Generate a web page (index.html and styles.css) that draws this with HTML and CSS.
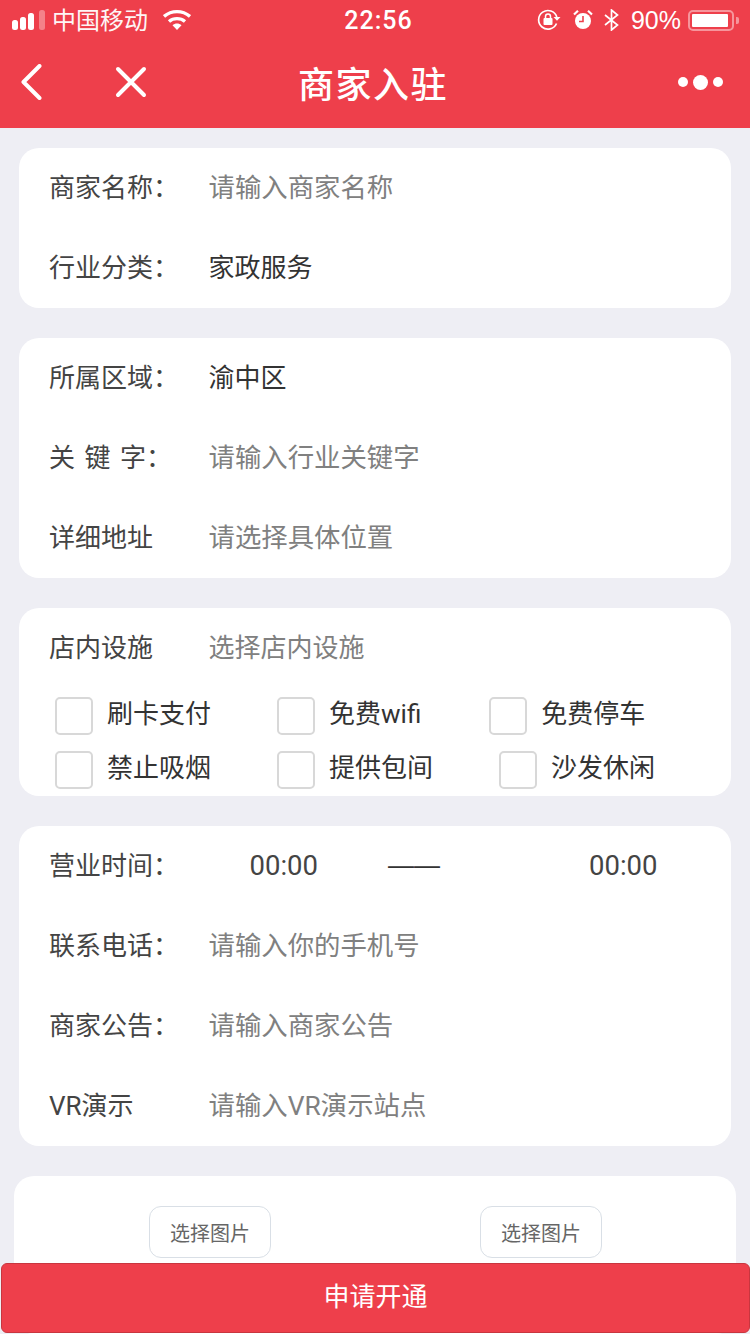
FILE: index.html
```html
<!DOCTYPE html>
<html lang="zh-CN">
<head>
    <meta name="viewport" content="width=device-width, initial-scale=1.0">
    <title>商家入驻</title>
    <link rel="stylesheet" href="styles.css">
</head>
<body>
    <div class="header">
        <div class="status-bar">
            <div class="status-left">
                <svg class="signal" width="34" height="22" viewBox="0 0 34 22">
                    <rect x="0" y="11" width="6" height="10" rx="2.5" fill="#fff"/>
                    <rect x="8" y="8" width="6" height="13" rx="2.5" fill="#fff"/>
                    <rect x="16" y="4" width="6" height="17" rx="2.5" fill="#fff"/>
                    <rect x="27" y="1" width="6" height="20" rx="2.5" fill="#fff" opacity="0.35"/>
                </svg>
                <span class="carrier">中国移动</span>
                <svg class="wifi" width="28" height="22" viewBox="0 0 28 22">
                    <path d="M1 7.5C8.500 1 19.500 1 27 7.500" fill="none" stroke="#fff" stroke-width="3.400"/>
                    <path d="M6 12.500C10.500 8.700 17.500 8.700 22 12.500" fill="none" stroke="#fff" stroke-width="3.400"/>
                    <path d="M9.500 16.300C12 14 16 14 18.500 16.300L14 21Z" fill="#fff"/>
                </svg>
            </div>
            <span class="clock">22:56</span>
            <div class="status-right">
                <svg width="24" height="22" viewBox="0 0 24 22">
                    <path d="M19.500 14.500A9.300 9.300 0 1 1 19.800 8" fill="none" stroke="#fff" stroke-width="1.700"/>
                    <path d="M16.500 8H23.500L20 11.800Z" fill="#fff"/>
                    <rect x="6.500" y="9" width="9" height="7" rx="1" fill="#fff"/>
                    <path d="M8.500 9.500V7.500A2.500 2.500 0 0 1 13.500 7.500V9.500" fill="none" stroke="#fff" stroke-width="1.500"/>
                </svg>
                <svg class="alarm" width="20" height="22" viewBox="0 0 20 22">
                    <circle cx="10" cy="12" r="8" fill="#fff"/>
                    <path d="M10 7V12.500H6" fill="none" stroke="#ee3f4b" stroke-width="1.600"/>
                    <path d="M1 5.500L5 1.800M19 5.500L15 1.800" stroke="#fff" stroke-width="2.200"/>
                </svg>
                <svg class="bluetooth" width="15" height="22" viewBox="0 0 15 22">
                    <path d="M1 6L13.500 16L7.500 21V1L13.500 6L1 16" fill="none" stroke="#fff" stroke-width="1.700"/>
                </svg>
                <span class="battery-text">90%</span>
                <div class="battery">
                    <div class="battery-body"><div class="battery-level"></div></div>
                    <div class="battery-nub"></div>
                </div>
            </div>
        </div>
        <div class="nav-bar">
            <div class="nav-left">
                <svg width="22" height="36" viewBox="0 0 22 36">
                    <path d="M19.500 2L3.500 18L19.500 34" fill="none" stroke="#fff" stroke-width="4" stroke-linecap="round" stroke-linejoin="round"/>
                </svg>
                <svg class="close" width="32" height="32" viewBox="0 0 32 32">
                    <path d="M3 3L29 29M29 3L3 29" fill="none" stroke="#fff" stroke-width="4" stroke-linecap="round"/>
                </svg>
            </div>
            <div class="nav-title">商家入驻</div>
            <div class="nav-right">
                <span class="dot"></span>
                <span class="dot dot-big"></span>
                <span class="dot"></span>
            </div>
        </div>
    </div>

    <div class="content">
        <div class="card">
            <div class="row"><span class="label">商家名称：</span><span class="hint">请输入商家名称</span></div>
            <div class="row"><span class="label">行业分类：</span><span class="value">家政服务</span></div>
        </div>

        <div class="card">
            <div class="row"><span class="label">所属区域：</span><span class="value">渝中区</span></div>
            <div class="row"><span class="label label-spaced">关 键 字：</span><span class="hint">请输入行业关键字</span></div>
            <div class="row"><span class="label">详细地址</span><span class="hint">请选择具体位置</span></div>
        </div>

        <div class="card card-facilities">
            <div class="row"><span class="label">店内设施</span><span class="hint hint-plain">选择店内设施</span></div>
            <div class="check-list">
                <div class="check-row">
                    <div class="check-item"><span class="check-box"></span>刷卡支付</div>
                    <div class="check-item check-item-wifi"><span class="check-box"></span>免费wifi</div>
                    <div class="check-item"><span class="check-box"></span>免费停车</div>
                </div>
                <div class="check-row">
                    <div class="check-item"><span class="check-box"></span>禁止吸烟</div>
                    <div class="check-item"><span class="check-box"></span>提供包间</div>
                    <div class="check-item"><span class="check-box"></span>沙发休闲</div>
                </div>
            </div>
        </div>

        <div class="card">
            <div class="row">
                <span class="label">营业时间：</span>
                <div class="time-range">
                    <span class="time">00:00</span>
                    <span class="time-dash">——</span>
                    <span class="time">00:00</span>
                </div>
            </div>
            <div class="row"><span class="label">联系电话：</span><span class="hint">请输入你的手机号</span></div>
            <div class="row"><span class="label">商家公告：</span><span class="hint">请输入商家公告</span></div>
            <div class="row"><span class="label">VR演示</span><span class="hint">请输入VR演示站点</span></div>
        </div>

        <div class="card card-images">
            <div class="pick-button">选择图片</div>
            <div class="pick-button">选择图片</div>
        </div>
    </div>

    <div class="submit-button"><span>申请开通</span></div>
</body>
</html>
```

FILE: styles.css
```css
body, html {
    overflow: hidden;
}

body {
    margin: 0;
    height: 1334px;
    background-color: #eeeef4;
    font-family: Roboto, "Noto Sans CJK SC", sans-serif;
    color: #333;
}

.header {
    background-color: #ee3f4b;
    color: #fff;
    height: 128px;
}

.status-bar {
    height: 40px;
    padding: 0 11px 0 12px;
    display: grid;
    grid-template-columns: 1fr auto 1fr;
    align-items: center;
    font-size: 24px;
}

.status-left {
    display: flex;
    align-items: center;
}

.carrier {
    margin-left: 6px;
    padding-bottom: 3px;
    opacity: 0.95;
}

.wifi {
    margin-left: 15px;
}

.clock {
    font-weight: 500;
    font-size: 25px;
    letter-spacing: 1px;
    margin-left: 6px;
}

.status-right {
    display: flex;
    align-items: center;
    justify-content: flex-end;
}

.alarm {
    margin-left: 12px;
}

.bluetooth {
    margin-left: 11px;
}

.battery-text {
    font-family: "Liberation Sans", sans-serif;
    margin-left: 12px;
    font-size: 25px;
}

.battery {
    display: flex;
    align-items: center;
    margin-left: 7px;
}

.battery-body {
    width: 46px;
    height: 21px;
    box-sizing: border-box;
    border: 2px solid rgba(255, 255, 255, 0.45);
    border-radius: 5px;
    padding: 2px;
}

.battery-level {
    width: 36px;
    height: 100%;
    background-color: #fff;
    border-radius: 1px;
}

.battery-nub {
    width: 3px;
    height: 7px;
    margin-left: 2px;
    background-color: rgba(255, 255, 255, 0.45);
    border-radius: 0 2px 2px 0;
}

.nav-bar {
    height: 88px;
    box-sizing: border-box;
    padding: 0 27px 4px 20px;
    display: grid;
    grid-template-columns: 1fr auto 1fr;
    align-items: center;
}

.nav-left {
    display: flex;
    align-items: center;
}

.close {
    margin-left: 73px;
}

.nav-title {
    font-size: 36px;
    font-weight: 500;
    letter-spacing: 1.5px;
    margin-left: 3px;
}

.nav-right {
    display: flex;
    align-items: center;
    justify-content: flex-end;
    gap: 5px;
}

.dot {
    width: 10px;
    height: 10px;
    background-color: #fff;
    border-radius: 50%;
}

.dot-big {
    width: 15px;
    height: 15px;
}

.content {
    padding: 20px 19px 0;
    display: flex;
    flex-direction: column;
    gap: 30px;
}

.card {
    background-color: #fff;
    border-radius: 20px;
    padding: 0 30px;
}

.row {
    height: 80px;
    box-sizing: border-box;
    padding-bottom: 6px;
    display: flex;
    align-items: center;
    font-size: 26px;
}

.label {
    width: 159.5px;
    flex-shrink: 0;
    white-space: pre;
    color: #444;
}

.label-spaced {
    word-spacing: 3px;
}

.hint {
    color: #808080;
    font-size: 26.4px;
}

.hint-plain {
    font-size: 26px;
}

.value {
    color: #333;
}

.card-facilities {
    height: 188px;
    overflow: hidden;
}

.check-list {
    margin-top: 9px;
    margin-left: 6px;
    display: flex;
    flex-direction: column;
    gap: 16px;
}

.check-row {
    display: flex;
    gap: 66px;
    height: 38px;
}

.check-item {
    display: flex;
    align-items: flex-start;
    font-size: 26px;
    color: #333;
    line-height: 34px;
}

.check-item-wifi {
    margin-right: 2px;
}

.check-box {
    width: 38px;
    height: 38px;
    box-sizing: border-box;
    border: 2px solid #d8d8d8;
    border-radius: 5px;
    margin-right: 14px;
}

.time-range {
    display: flex;
    align-items: center;
    margin-left: 41px;
    padding-top: 4px;
}

.time {
    font-size: 27.500px;
    color: #444;
}

.time-dash {
    font-family: "Liberation Sans", sans-serif;
    color: #333;
    margin-left: 70px;
    margin-right: 149px;
}

.card-images {
    margin: 0 -5px;
    padding: 30px 134px 0 135px;
    height: 158px;
    box-sizing: border-box;
    display: flex;
    justify-content: space-between;
    align-items: flex-start;
}

.pick-button {
    width: 122px;
    height: 52px;
    box-sizing: border-box;
    border: 1px solid #d9dfe6;
    border-radius: 12px;
    font-size: 20px;
    color: #666;
    display: flex;
    align-items: center;
    justify-content: center;
}

.submit-button {
    position: fixed;
    left: 1px;
    right: 0;
    bottom: 1px;
    height: 70px;
    box-sizing: border-box;
    padding-bottom: 8px;
    background-color: #ee3f4b;
    border: 1px solid #c8363f;
    border-radius: 6px;
    color: #fff;
    font-size: 26px;
    display: flex;
    align-items: center;
    justify-content: center;
}
```
